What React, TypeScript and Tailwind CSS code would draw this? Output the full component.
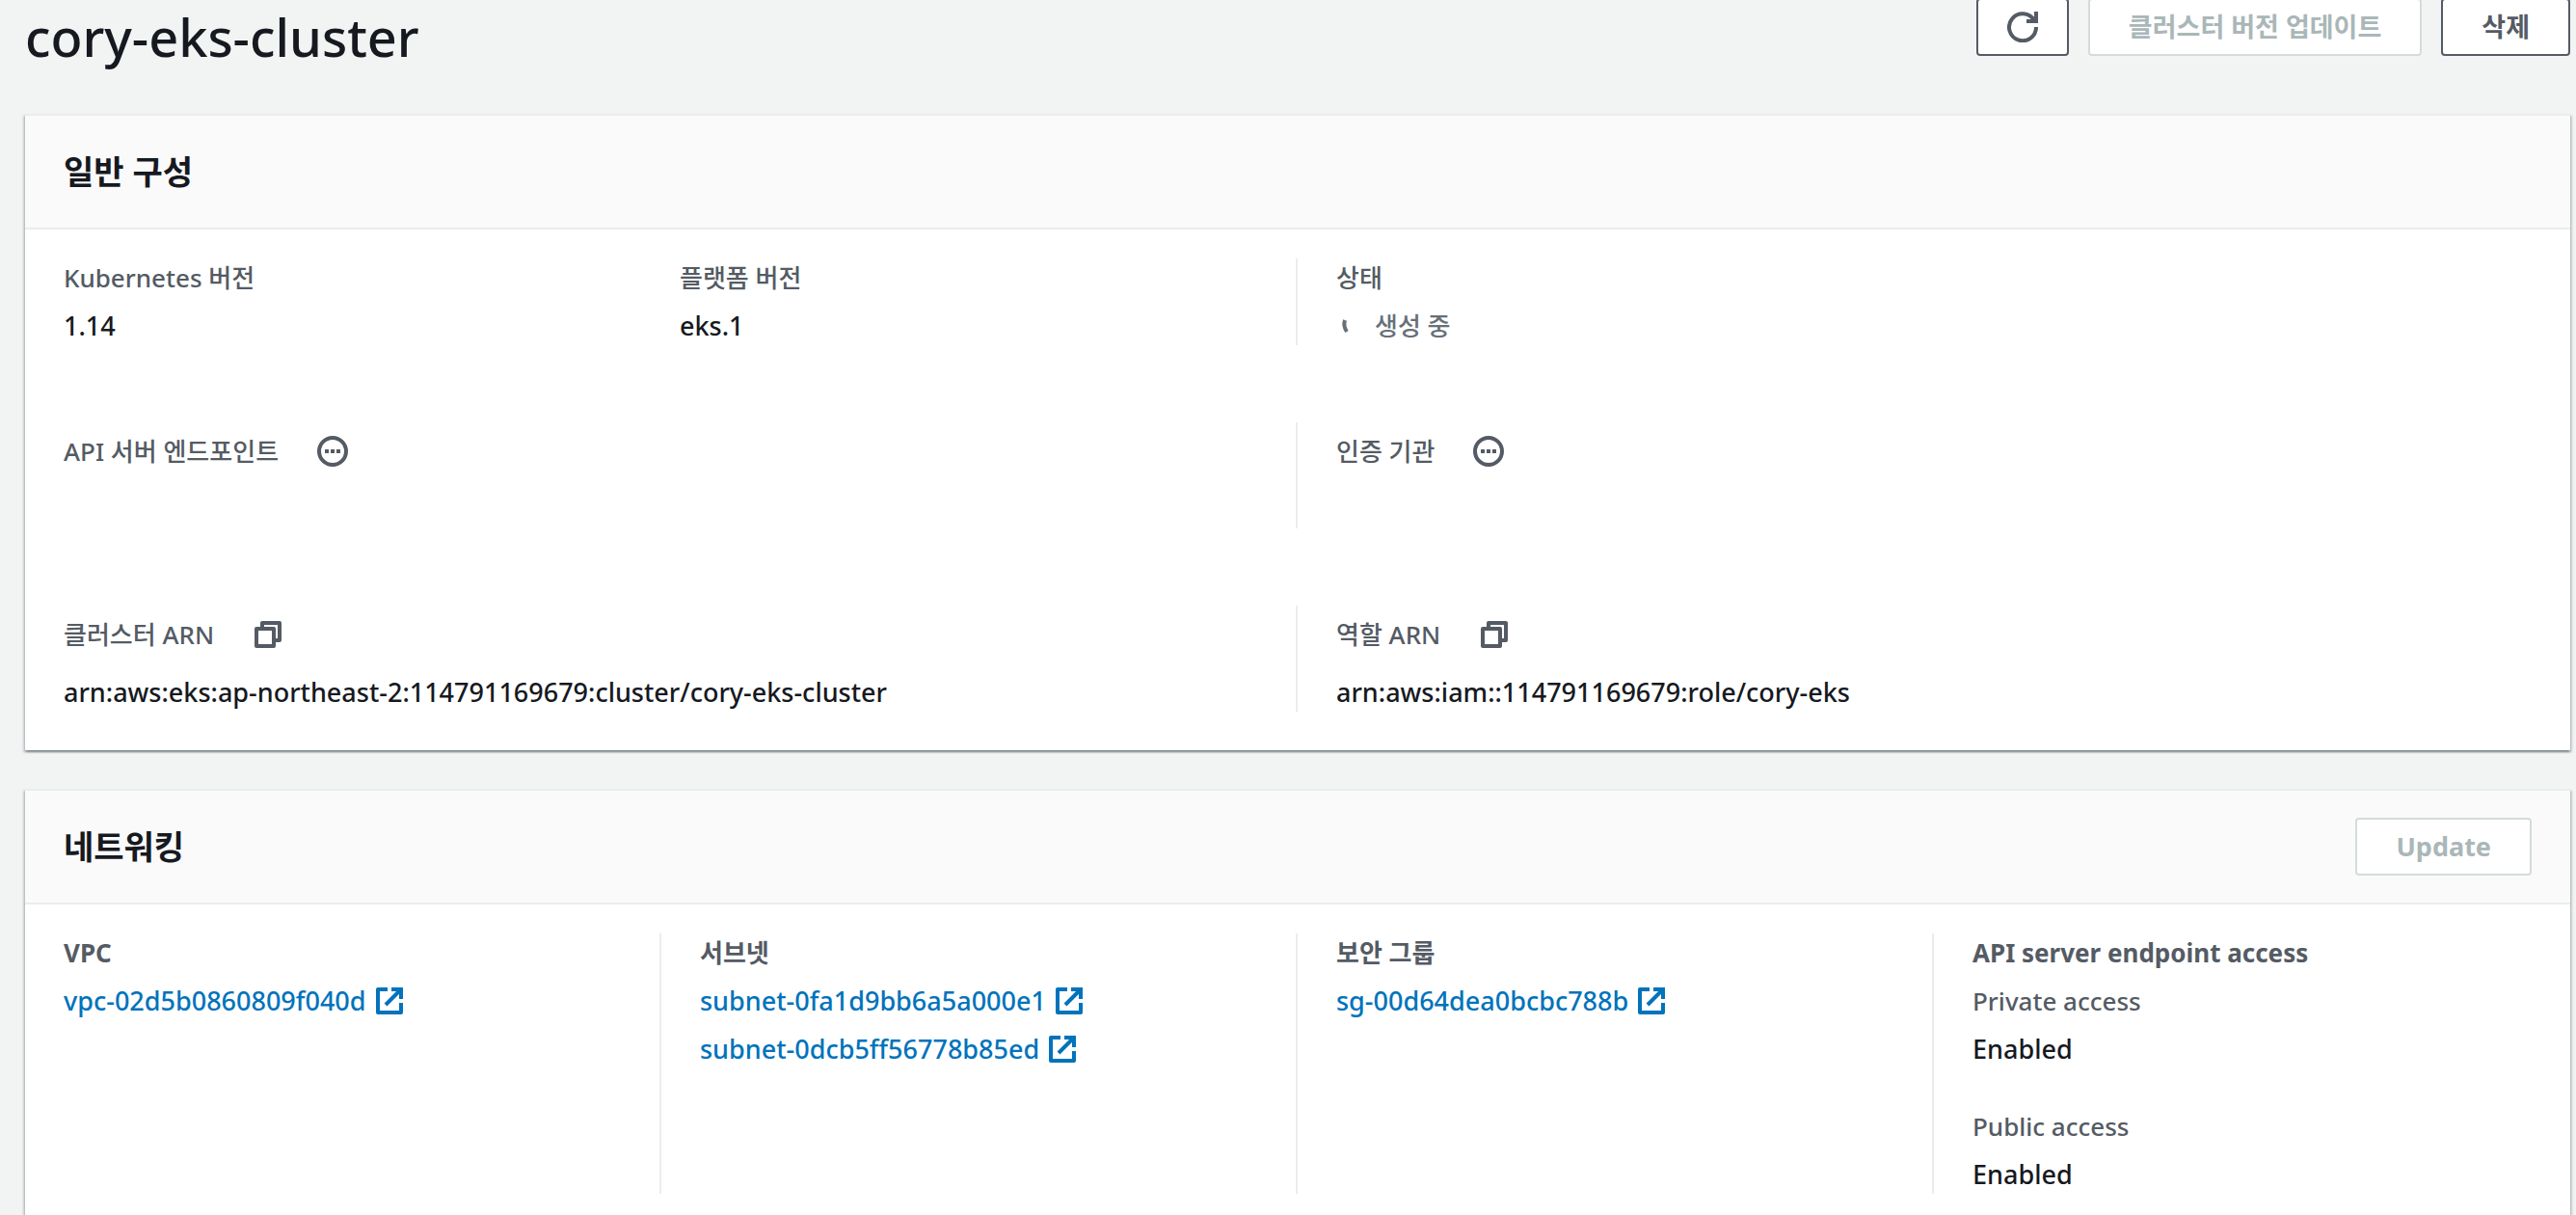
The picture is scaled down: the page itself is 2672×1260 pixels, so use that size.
import React from "react";

function RefreshIcon() {
  return (
    <svg className="size-8" viewBox="0 0 32 32" fill="none" stroke="currentColor" strokeWidth="4" aria-hidden="true">
      <path d="M20 10h10V0" />
      <path d="M30 16a14 14 0 1 1-2-7" />
    </svg>
  );
}

function MoreIcon() {
  return (
    <svg className="size-8" viewBox="0 0 32 32" aria-hidden="true">
      <circle cx="16" cy="16" r="14" fill="none" stroke="currentColor" strokeWidth="4" />
      <path d="M8 14h4v4H8zM14 14h4v4h-4zM20 14h4v4h-4z" fill="currentColor" />
    </svg>
  );
}

function CopyIcon() {
  return (
    <svg className="size-8" viewBox="0 0 32 32" fill="none" stroke="currentColor" strokeWidth="4" strokeLinejoin="round" aria-hidden="true">
      <path d="M4 10h18v18H4z" />
      <path d="M10 10V4h18v18h-6" />
    </svg>
  );
}

function ExternalIcon() {
  return (
    <svg className="size-8" viewBox="0 0 32 32" fill="none" stroke="currentColor" strokeWidth="4" strokeLinejoin="round" aria-hidden="true">
      <path d="M14 4H4v24h24V18" />
      <path d="M18 4h10v10M28 4 12 20" strokeLinejoin="miter" />
    </svg>
  );
}

function SpinnerIcon() {
  return (
    <svg className="size-8" viewBox="0 0 32 32" fill="none" stroke="currentColor" strokeWidth="4" aria-hidden="true">
      <path d="M9 10q-2 6 2 12" />
    </svg>
  );
}

function Button({ children, disabled, label }: { children: React.ReactNode; disabled?: boolean; label?: string }) {
  return (
    <button
      type="button"
      disabled={disabled}
      aria-label={label}
      className="flex h-15 min-w-24 items-center justify-center rounded-sm border-2 border-[#545b64] bg-white px-[30px] text-[27px] font-bold text-[#545b64] disabled:border-[#d5dbdb] disabled:px-10 disabled:text-[#aab7b8]"
    >
      {children}
    </button>
  );
}

function Panel({ title, action, children }: { title: string; action?: React.ReactNode; children: React.ReactNode }) {
  return (
    <section className="border-t-2 border-[#eaeded] bg-white shadow-[0_2px_2px_0_rgba(0,28,36,0.3),2px_2px_2px_0_rgba(0,28,36,0.15),-2px_2px_2px_0_rgba(0,28,36,0.15)]">
      <header className="flex min-h-[118px] items-center justify-between border-b-2 border-[#eaeded] bg-[#fafafa] px-10">
        <h2 className="text-[34px] leading-11 font-bold">{title}</h2>
        {action}
      </header>
      {children}
    </section>
  );
}

function Field({ label, children }: { label: string; children: React.ReactNode }) {
  return (
    <dl className="flex flex-col gap-2.5 font-medium">
      <dt className="text-[#545b64]">{label}</dt>
      <dd className="text-[27px]">{children}</dd>
    </dl>
  );
}

function IconField({ label, icon, action, value }: { label: string; icon: React.ReactNode; action: string; value?: string }) {
  return (
    <dl className="flex flex-col gap-2.5 px-10 font-medium">
      <dt className="flex h-15 items-center gap-10 text-[#545b64]">
        {label}
        <button type="button" aria-label={action}>
          {icon}
        </button>
      </dt>
      <dd className="min-h-10 text-[27px]">{value}</dd>
    </dl>
  );
}

function ResourceLink({ id }: { id: string }) {
  return (
    <a href={`#${id}`} className="flex items-center gap-2 text-[27px] font-medium text-[#0073bb]">
      {id}
      <ExternalIcon />
    </a>
  );
}

function Resources({ title, ids }: { title: string; ids: string[] }) {
  return (
    <div className="flex flex-col gap-2.5 px-10">
      <h3 className="font-bold text-[#545b64]">{title}</h3>
      {ids.map((id) => (
        <ResourceLink key={id} id={id} />
      ))}
    </div>
  );
}

const halves = "grid grid-cols-2 divide-x-2 divide-[#eaeded]";

export default function App() {
  return (
    <div className="h-screen overflow-hidden bg-[#f2f3f3] pr-1.5 pl-[26px] font-['Noto_Sans','Noto_Sans_CJK_KR',sans-serif] text-[26px] leading-10 text-[#16191f]">
      <div className="flex h-[118px] items-start justify-between">
        <h1 className="text-[54px] leading-19 font-medium">cory-eks-cluster</h1>
        <div className="-mt-0.5 flex gap-5">
          <Button label="새로 고침">
            <RefreshIcon />
          </Button>
          <Button disabled>클러스터 버전 업데이트</Button>
          <Button>
            <span className="px-2.5">삭제</span>
          </Button>
        </div>
      </div>

      <main className="flex flex-col gap-10">
        <Panel title="일반 구성">
          <div className="flex flex-col gap-20 pt-[30px] pb-10">
            <div className={halves}>
              <div className="grid grid-cols-2 pl-10">
                <Field label="Kubernetes 버전">1.14</Field>
                <Field label="플랫폼 버전">eks.1</Field>
              </div>
              <div className="px-10">
                <Field label="상태">
                  <span className="flex items-center gap-2 text-[26px] text-[#687078]">
                    <SpinnerIcon />
                    생성 중
                  </span>
                </Field>
              </div>
            </div>
            <div className={halves}>
              <IconField label="API 서버 엔드포인트" icon={<MoreIcon />} action="API 서버 엔드포인트 상태" />
              <IconField label="인증 기관" icon={<MoreIcon />} action="인증 기관 상태" />
            </div>
            <div className={halves}>
              <IconField
                label="클러스터 ARN"
                icon={<CopyIcon />}
                action="클러스터 ARN 복사"
                value="arn:aws:eks:ap-northeast-2:114791169679:cluster/cory-eks-cluster"
              />
              <IconField label="역할 ARN" icon={<CopyIcon />} action="역할 ARN 복사" value="arn:aws:iam::114791169679:role/cory-eks" />
            </div>
          </div>
        </Panel>

        <Panel title="네트워킹" action={<Button disabled>Update</Button>}>
          <div className="grid grid-cols-4 divide-x-2 divide-[#eaeded] pt-[30px] pb-10">
            <Resources title="VPC" ids={["vpc-02d5b0860809f040d"]} />
            <Resources title="서브넷" ids={["subnet-0fa1d9bb6a5a000e1", "subnet-0dcb5ff56778b85ed"]} />
            <Resources title="보안 그룹" ids={["sg-00d64dea0bcbc788b"]} />
            <div className="flex flex-col gap-2.5 px-10">
              <h3 className="font-bold text-[#545b64]">API server endpoint access</h3>
              <div className="flex flex-col gap-10">
                <Field label="Private access">Enabled</Field>
                <Field label="Public access">Enabled</Field>
              </div>
            </div>
          </div>
        </Panel>
      </main>
    </div>
  );
}
